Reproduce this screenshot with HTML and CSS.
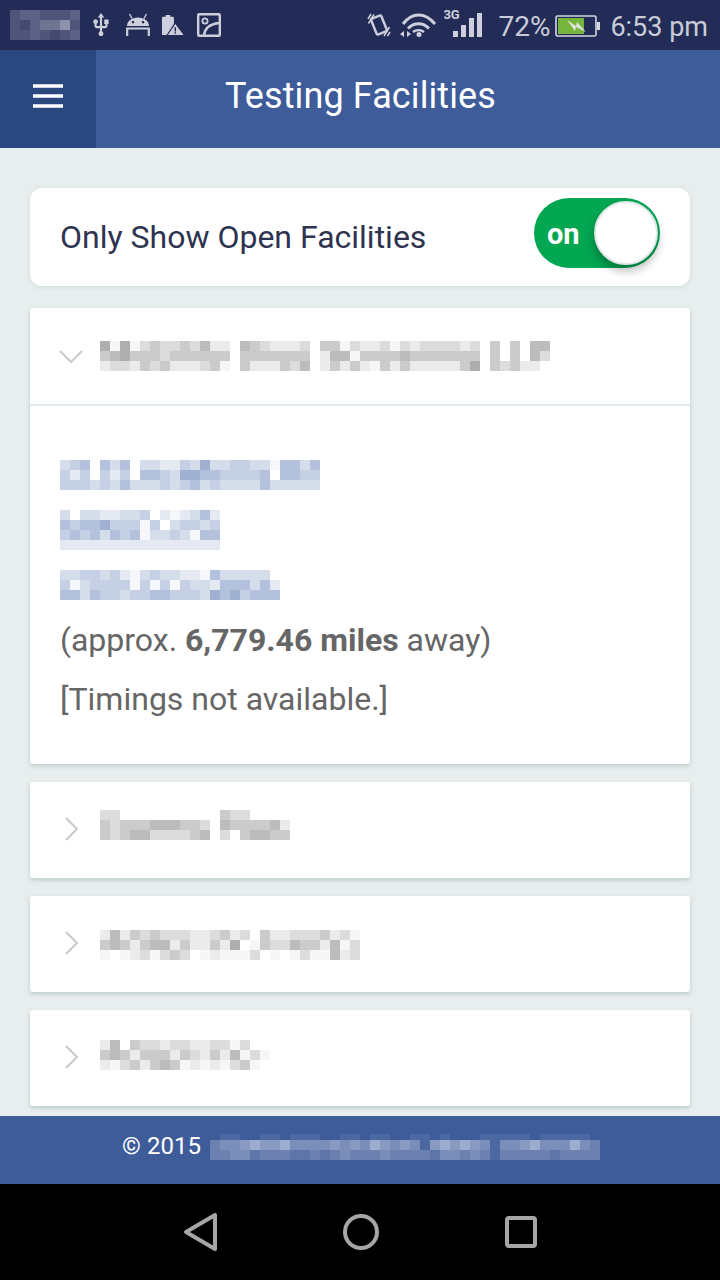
FILE: index.html
```html
<!DOCTYPE html>
<html>
  <head>
    <title>Testing Facilities</title>
    <meta charset="UTF-8">
    <link rel="stylesheet" href="styles.css">
  </head>
  <body>
    <!-- status bar -->
    <div class="status-bar">
      <div class="status-left">
        <div class="mosaic" data-tone="dark" data-rows="dccdddc|decbbad|ddcdedc"></div>
        <svg class="ico ico-usb" viewBox="0 0 24 24"><path d="M15 7v4h1v2h-3V5h2l-3-4-3 4h2v8H8v-2.07c.7-.37 1.2-1.08 1.2-1.93 0-1.21-.99-2.2-2.2-2.2-1.21 0-2.2.99-2.2 2.2 0 .85.5 1.56 1.2 1.93V13c0 1.11.89 2 2 2h3v3.05c-.71.37-1.2 1.1-1.2 1.95 0 1.22.99 2.2 2.2 2.2 1.21 0 2.2-.98 2.2-2.2 0-.85-.49-1.58-1.2-1.95V15h3c1.11 0 2-.89 2-2v-2h1V7h-4z"/></svg>
        <svg class="ico ico-droid" viewBox="0 0 24 24"><path d="M1 13C1 8 6 4.500 12 4.500S23 8 23 13zM7 7.800a1.300 1.300 0 1 0 .01 0zM17 7.800a1.300 1.300 0 1 0 .01 0z" fill-rule="evenodd"/><path class="line" d="M6 5.500 3.500 1M18 5.500 20.500 1" stroke-width="1.400"/><path class="line" d="M1.200 23v-7.500h21.600V23" stroke-width="2.200"/></svg>
        <svg class="ico ico-batt" viewBox="0 0 24 24"><path d="M4 1h5v2h3a1 1 0 0 1 1 1v6.500L5 23H1a1 1 0 0 1-1-1V4a1 1 0 0 1 1-1h3z"/><path d="M14.500 11 23.500 23H6.500zM13.700 14.500v4.700h1.600v-4.700zM13.700 20v1.600h1.600V20z" fill-rule="evenodd"/></svg>
        <svg class="ico ico-pic" viewBox="0 0 24 24"><rect class="line" x="1.200" y="1.200" width="21.600" height="21.600" rx="1" stroke-width="2.400"/><circle class="line" cx="8" cy="8" r="2.600" stroke-width="1.800"/><path class="line" d="M7 22c1-7 6-11 15-12" stroke-width="2.400"/></svg>
      </div>
      <div class="status-right">
        <svg class="ico ico-vib" viewBox="0 0 24 26"><rect class="line" x="6.500" y="4.500" width="11" height="17" rx="1.500" transform="rotate(-22 12 13)" stroke-width="2.400"/><path class="line" d="M1 7 4 2M1.500 11.500 7 2.500M17 24l5.500-9M20.500 24l2.500-4" stroke-width="1.500"/></svg>
        <svg class="ico ico-wifi" viewBox="0 0 37 24"><path class="line" d="M3 11C12 -1 25 -1 35 11" stroke-width="3"/><path class="line" d="M8 15.500c6-6.500 15-6.500 21 0" stroke-width="3"/><path class="line" d="M13 19c3-2.500 8-2.500 11 0" stroke-width="2.400"/><circle cx="19" cy="21.500" r="2.500"/><path d="M0 21 4 18v6zM11 21l-4-3v6z"/></svg>
        <div class="signal">
          <span class="net">3G</span>
          <div class="bars">
            <span class="bar bar-1"></span>
            <span class="bar bar-2"></span>
            <span class="bar bar-3"></span>
            <span class="bar bar-4"></span>
          </div>
        </div>
        <span class="status-text pct">72%</span>
        <svg class="ico ico-power" viewBox="0 0 45 22"><rect x="1" y="1" width="40" height="20" rx="1.500" fill="none" stroke="#d4d6e0" stroke-width="1.600"/><rect x="3" y="3" width="26" height="16" fill="#76b53c"/><rect x="42" y="7" width="3" height="8" fill="#d4d6e0"/><path d="M12 5l9 6 1-4 9 10-10-5-1 4z" fill="#dfe3dc"/></svg>
        <span class="status-text clock">6:53 pm</span>
      </div>
    </div>

    <!-- header -->
    <div class="app-bar">
      <div class="menu-btn">
        <svg viewBox="0 0 30 24" width="30" height="24"><path d="M0 2h30M0 12h30M0 22h30" stroke="#fff" stroke-width="3.600"/></svg>
      </div>
      <div class="app-title">Testing Facilities</div>
    </div>

    <div class="content">
      <div class="toggle-card">
        <span class="toggle-label">Only Show Open Facilities</span>
        <div class="toggle">
          <span class="toggle-on">on</span>
          <span class="knob"></span>
        </div>
      </div>

      <div class="card">
        <div class="card-head open">
          <svg class="chev-down" viewBox="0 0 24 14"><path d="M1 1l11 11L23 1"/></svg>
          <div class="mosaic" data-rows="afafdcddcdbee-bcdeeed-ccfdeedfdedddded-c-c-bb|cbacccdcccccc-ccccccc-ebbfccccbccccccc-c-c-bd|eddecdceeedcf-ceeecdb-ececefceceeeeeca-cdcee-"></div>
        </div>
        <div class="card-body">
          <div class="mosaic addr" data-tone="blue" data-rows="dcb-bdb-ddeecdaddccddfbbdb|cec-cec-bbcdaabbccccb-bbcc|cccdcdbdddcdcbdcddddbddddd"></div>
          <div class="mosaic addr" data-tone="blue" data-rows="d-ddeeddc-efedbe|bcbbacccfc-dccdc|cbcbdbcbfddcdfbb|eeeeeeeeeeeeeeee"></div>
          <div class="mosaic addr addr-last" data-tone="blue" data-rows="ddccdcefdcddeefbddddd|cfdccccfcfcfcddebbbdbe|bbdbccdccbbcccdabacbbb"></div>
          <p class="dist">(approx. <b>6,779.46 miles</b> away)</p>
          <p class="dist">[Timings not available.]</p>
        </div>
      </div>

      <div class="card">
        <div class="card-head">
          <svg class="chev-right" viewBox="0 0 14 24"><path d="M1 1l11 11L1 23"/></svg>
          <div class="mosaic name-2" data-rows="dd---------|-|cdd----|cdcccbbbccd|-|bccccbe|cdcbbddddcb|-|d-cbbcc" data-words="3"></div>
        </div>
      </div>
      <div class="card">
        <div class="card-head">
          <svg class="chev-right" viewBox="0 0 14 24"><path d="M1 1l11 11L1 23"/></svg>
          <div class="mosaic name-3" data-rows="ebecdcdddeedced-ceedddcedf|cbcecbbeceecea-fcddbccebfd|f-fedfdcd-fefffd-f-fdffbed"></div>
        </div>
      </div>
      <div class="card">
        <div class="card-head">
          <svg class="chev-right" viewBox="0 0 14 24"><path d="M1 1l11 11L1 23"/></svg>
          <div class="mosaic name-4" data-rows="eb-cddeddeeddfd--|cbcecccecdecebfdf|efdcecbcfefefdcf-"></div>
        </div>
      </div>
    </div>

    <div class="footer">
      <span class="copy">© 2015</span>
      <div class="mosaic foot-mosaic" data-tone="foot" data-first="6" data-rows="-ff--ff-fff--ff-ff--ff-f---fffff-fffff-|dccbabbaccccbcbcabcbcfbababcfccbacccacd|ddccedddeededcdddcddddeccdcdfdddddedddd"></div>
    </div>

    <div class="nav-bar">
      <svg class="nav-ico" viewBox="0 0 36 40" width="36" height="40"><path d="M3 20 32 3v34z"/></svg>
      <svg class="nav-ico" viewBox="0 0 36 36" width="36" height="36"><circle cx="18" cy="18" r="16"/></svg>
      <svg class="nav-ico" viewBox="0 0 36 36" width="36" height="36"><rect x="4" y="4" width="28" height="28" rx="2"/></svg>
    </div>

    <script src="script.js"></script>
  </body>
</html>
```

FILE: styles.css
```css
* {
  box-sizing: border-box;
}

html, body {
  margin: 0;
  padding: 0;
}

body {
  width: 720px;
  height: 1280px;
  display: flex;
  flex-direction: column;
  overflow: hidden;
  background: #e8eeee;
  font-family: Roboto, "Liberation Sans", sans-serif;
}

/* status bar */
.status-bar {
  height: 50px;
  flex: none;
  display: flex;
  justify-content: space-between;
  align-items: center;
  padding: 0 12px 0 10px;
  background: #232c57;
}

.status-left, .status-right {
  display: flex;
  align-items: center;
}

.ico {
  display: block;
  flex: none;
  fill: #cdd0dc;
}

.ico .line {
  fill: none;
  stroke: #cdd0dc;
}

.ico-usb { width: 26px; height: 26px; margin-left: 8px; }
.ico-droid { width: 24px; height: 24px; margin-left: 12px; }
.ico-batt { width: 22px; height: 24px; margin-left: 12px; }
.ico-pic { width: 24px; height: 24px; margin-left: 13px; }
.ico-vib { width: 24px; height: 26px; }
.ico-wifi { width: 37px; height: 24px; margin-left: 9px; }
.ico-power { width: 45px; height: 22px; margin-left: 5px; margin-top: 1px; }

.signal {
  position: relative;
  width: 30px;
  height: 24px;
  margin-left: 15px;
}

.net {
  position: absolute;
  top: -6px;
  left: -9px;
  font-size: 13px;
  font-weight: 700;
  color: #cdd0dc;
}

.bars {
  position: absolute;
  right: 0;
  bottom: 0;
  display: flex;
  align-items: flex-end;
  gap: 3px;
}

.bar {
  width: 5px;
  background: #cdd0dc;
}

.bar-1 { height: 6px; }
.bar-2 { height: 12px; }
.bar-3 { height: 19px; }
.bar-4 { height: 24px; }

.status-text {
  padding-top: 3px;
  color: #c9ccd8;
}

.pct {
  margin-left: 16px;
  font-size: 28px;
}

.clock {
  margin-left: 10px;
  font-size: 27px;
}

/* header */
.app-bar {
  height: 98px;
  flex: none;
  display: flex;
  align-items: center;
  background: #3e5c9a;
}

.menu-btn {
  width: 96px;
  height: 100%;
  display: flex;
  align-items: center;
  padding: 0 0 7px 33px;
  background: #2b4780;
}

.app-title {
  margin-left: 129px;
  padding-bottom: 6px;
  font-size: 36px;
  letter-spacing: .1px;
  color: #fff;
}

/* main area */
.content {
  flex: 1;
  padding: 40px 30px 0;
  overflow: hidden;
}

.toggle-card {
  height: 98px;
  display: flex;
  align-items: center;
  justify-content: space-between;
  padding: 0 30px;
  margin-bottom: 22px;
  background: #fff;
  border-radius: 12px;
  box-shadow: 0 1px 4px rgba(150, 170, 170, .3);
}

.toggle-label {
  font-size: 32px;
  color: #2e3350;
}

.toggle {
  position: relative;
  width: 126px;
  height: 70px;
  margin-top: -8px;
  border-radius: 35px;
  background: #03a651;
}

.toggle-on {
  position: absolute;
  left: 13px;
  top: 19px;
  font-size: 29px;
  font-weight: 700;
  color: #fff;
}

.knob {
  position: absolute;
  top: 3px;
  right: 2px;
  width: 64px;
  height: 64px;
  border-radius: 50%;
  background: #fff;
  border: 2px solid #dfe6ea;
  box-shadow: 0 6px 10px rgba(0, 0, 0, .28);
}

.card {
  margin-bottom: 18px;
  background: #fff;
  border-radius: 3px;
  box-shadow: 0 2px 4px rgba(130, 160, 160, .45);
}

.card-head {
  height: 96px;
  display: flex;
  align-items: center;
  padding-left: 30px;
}

.card-head.open {
  height: 98px;
  border-bottom: 2px solid #e1e9e9;
}

.chev-down, .chev-right {
  flex: none;
  fill: none;
  stroke: #c6cac9;
  stroke-width: 2;
}

.chev-down {
  width: 24px;
  height: 14px;
  margin: 2px 17px 0 -1px;
}

.chev-right {
  width: 14px;
  height: 24px;
  margin: 0 21px 2px 5px;
}

.card-body {
  padding: 54px 30px 35px;
}

.addr {
  margin-bottom: 20px;
}

.addr-last {
  margin-bottom: 11px;
}

.dist {
  margin: 0;
  height: 59px;
  font-size: 32px;
  line-height: 59px;
  color: #666;
}

.dist b {
  font-weight: 700;
}

/* pixelated patches */
.mosaic {
  display: block;
  flex: none;
}

.mosaic svg {
  display: block;
}

.name-2 { margin-bottom: 10px; }
.name-3 { margin-top: 2px; }
.name-4 { margin-bottom: 6px; }

.footer {
  height: 68px;
  flex: none;
  display: flex;
  align-items: center;
  justify-content: center;
  gap: 9px;
  padding-left: 2px;
  background: #3e5c9a;
}

.copy {
  padding-bottom: 8px;
  font-size: 24px;
  color: #fff;
}

.foot-mosaic {
  margin-top: -6px;
}

.nav-bar {
  height: 96px;
  flex: none;
  display: flex;
  align-items: center;
  gap: 124px;
  padding-left: 183px;
  background: #000;
}

.nav-ico {
  fill: none;
  stroke: #a6a6a6;
  stroke-width: 4;
  stroke-linejoin: round;
}
```

FILE: script.js
```js
// builds the pixelated patches from rows of shade letters
var tones = {
  grey: { a: '#aeaeae', b: '#bcbcbc', c: '#cbcbcb', d: '#dcdcdc', e: '#ebebeb', f: '#f6f6f6' },
  blue: { a: '#a0b0d0', b: '#b4c1dc', c: '#c6d0e4', d: '#d5dcea', e: '#e5e9f2', f: '#f6f7fb' },
  dark: { a: '#8d91ab', b: '#6f7492', c: '#5c6285', d: '#4f5579', e: '#454b70', f: '#3a4167' },
  foot: { a: '#9dadd0', b: '#8899c2', c: '#7b8eba', d: '#6c81b0', e: '#5d75a8', f: '#4c68a0' }
};

function drawMosaic(el) {
  var rows = el.getAttribute('data-rows').split('|');
  var tone = tones[el.getAttribute('data-tone') || 'grey'];
  var first = parseInt(el.getAttribute('data-first') || '10', 10);
  var words = parseInt(el.getAttribute('data-words') || '0', 10);
  var cell = 10;

  // data-words: each visual row is written as that many pieces
  if (words) {
    var merged = [];
    for (var r = 0; r < rows.length; r += words) {
      merged.push(rows.slice(r, r + words).join(''));
    }
    rows = merged;
  }

  var cols = 0;
  rows.forEach(function(row) { cols = Math.max(cols, row.length); });

  var height = first + (rows.length - 1) * cell;
  var svg = document.createElementNS('http://www.w3.org/2000/svg', 'svg');
  svg.setAttribute('width', cols * cell);
  svg.setAttribute('height', height);
  svg.setAttribute('shape-rendering', 'crispEdges');

  rows.forEach(function(row, y) {
    for (var x = 0; x < row.length; x++) {
      var color = tone[row[x]];
      if (!color) continue;
      var rect = document.createElementNS('http://www.w3.org/2000/svg', 'rect');
      rect.setAttribute('x', x * cell);
      rect.setAttribute('y', y === 0 ? 0 : first + (y - 1) * cell);
      rect.setAttribute('width', cell);
      rect.setAttribute('height', y === 0 ? first : cell);
      rect.setAttribute('fill', color);
      svg.appendChild(rect);
    }
  });
  el.appendChild(svg);
}

document.querySelectorAll('.mosaic').forEach(drawMosaic);
```
